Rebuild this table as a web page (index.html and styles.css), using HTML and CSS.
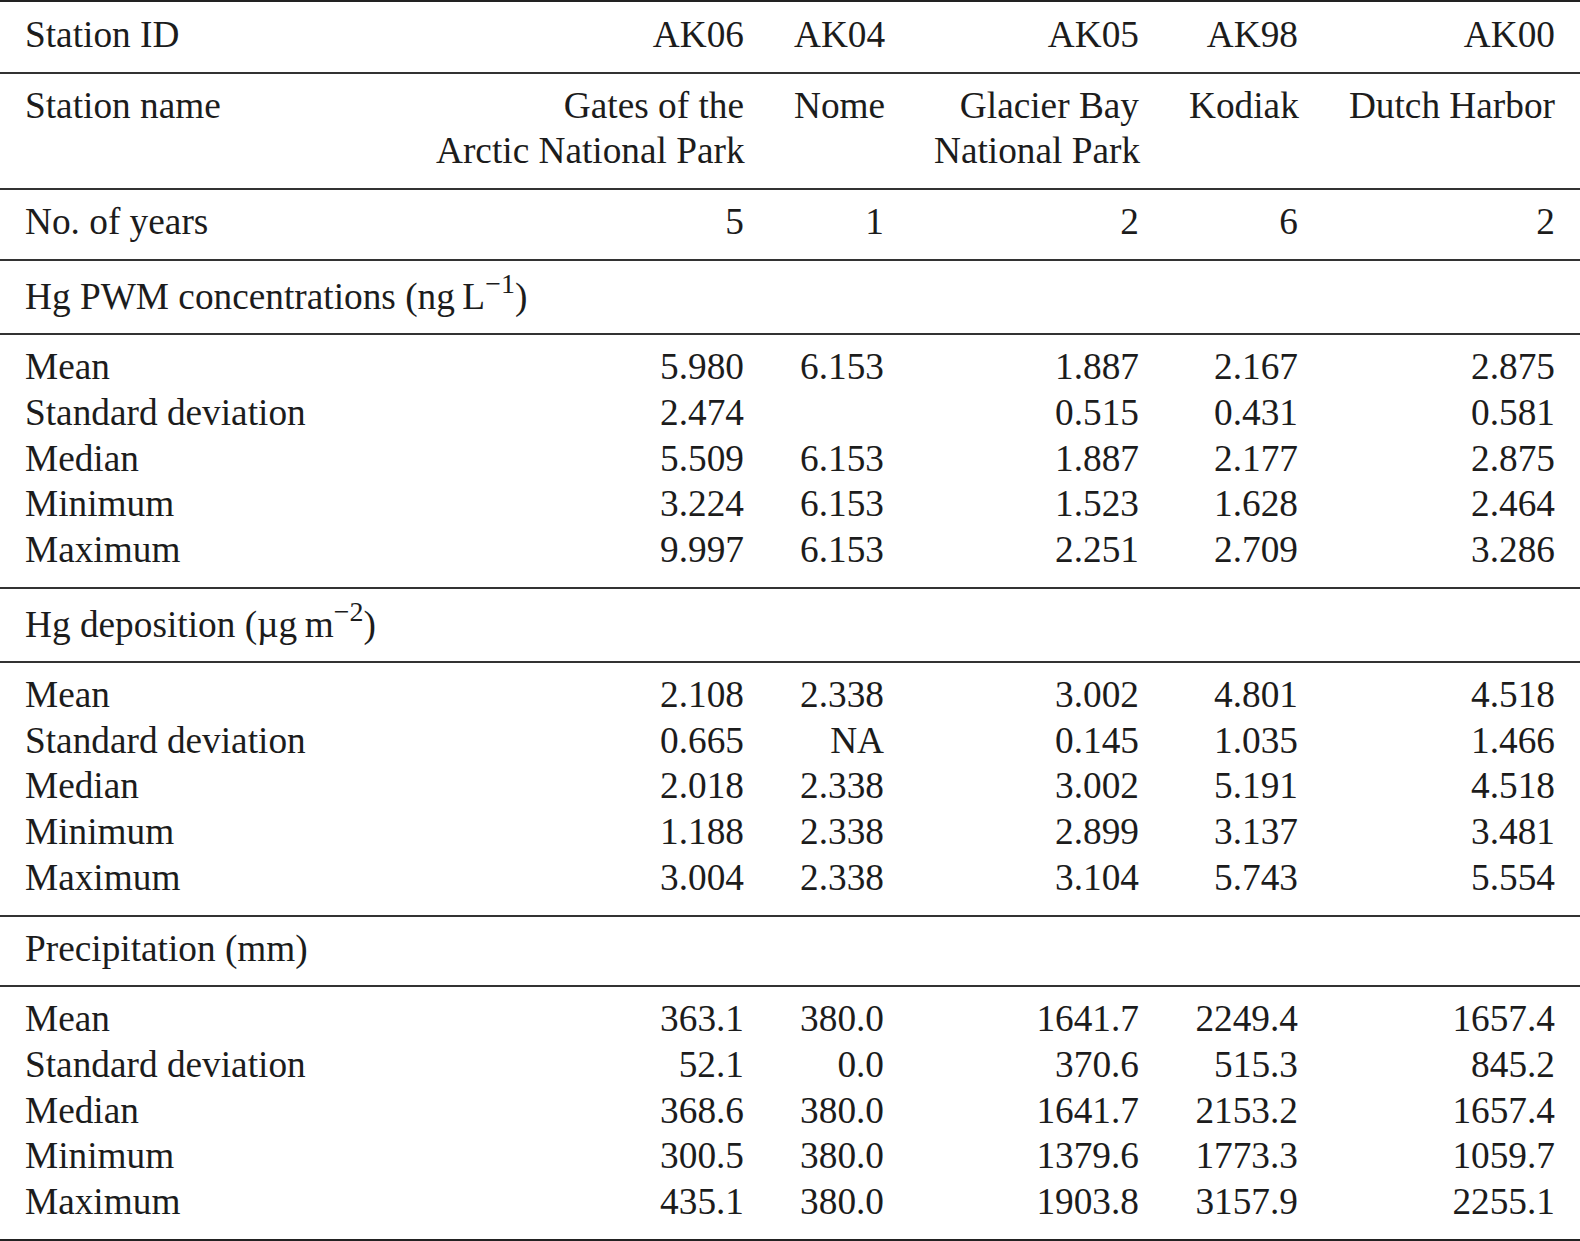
FILE: index.html
```html
<!DOCTYPE html>
<html lang="en">
<head>
<meta charset="utf-8">
<title>Alaska Hg stations</title>
<link rel="stylesheet" href="styles.css">
</head>
<body>
<table class="data">
  <colgroup>
    <col class="c-label">
    <col class="c-ak06">
    <col class="c-ak04">
    <col class="c-ak05">
    <col class="c-ak98">
    <col class="c-ak00">
  </colgroup>
  <tbody>
    <tr class="single top-rule">
      <td>Station ID</td><td>AK06</td><td>AK04</td><td>AK05</td><td>AK98</td><td>AK00</td>
    </tr>
    <tr class="single">
      <td>Station name</td><td>Gates of the<br>Arctic National Park</td><td>Nome</td><td>Glacier Bay<br>National Park</td><td>Kodiak</td><td>Dutch Harbor</td>
    </tr>
    <tr class="single">
      <td>No. of years</td><td>5</td><td>1</td><td>2</td><td>6</td><td>2</td>
    </tr>
    <tr class="single section">
      <td colspan="6">Hg PWM concentrations (ng&#8201;L<sup>−1</sup>)</td>
    </tr>
  </tbody>
  <tbody class="group">
    <tr><td>Mean</td><td>5.980</td><td>6.153</td><td>1.887</td><td>2.167</td><td>2.875</td></tr>
    <tr><td>Standard deviation</td><td>2.474</td><td></td><td>0.515</td><td>0.431</td><td>0.581</td></tr>
    <tr><td>Median</td><td>5.509</td><td>6.153</td><td>1.887</td><td>2.177</td><td>2.875</td></tr>
    <tr><td>Minimum</td><td>3.224</td><td>6.153</td><td>1.523</td><td>1.628</td><td>2.464</td></tr>
    <tr><td>Maximum</td><td>9.997</td><td>6.153</td><td>2.251</td><td>2.709</td><td>3.286</td></tr>
  </tbody>
  <tbody>
    <tr class="single section">
      <td colspan="6">Hg deposition (µg&#8201;m<sup>−2</sup>)</td>
    </tr>
  </tbody>
  <tbody class="group">
    <tr><td>Mean</td><td>2.108</td><td>2.338</td><td>3.002</td><td>4.801</td><td>4.518</td></tr>
    <tr><td>Standard deviation</td><td>0.665</td><td>NA</td><td>0.145</td><td>1.035</td><td>1.466</td></tr>
    <tr><td>Median</td><td>2.018</td><td>2.338</td><td>3.002</td><td>5.191</td><td>4.518</td></tr>
    <tr><td>Minimum</td><td>1.188</td><td>2.338</td><td>2.899</td><td>3.137</td><td>3.481</td></tr>
    <tr><td>Maximum</td><td>3.004</td><td>2.338</td><td>3.104</td><td>5.743</td><td>5.554</td></tr>
  </tbody>
  <tbody>
    <tr class="single section">
      <td colspan="6">Precipitation (mm)</td>
    </tr>
  </tbody>
  <tbody class="group last-group">
    <tr><td>Mean</td><td>363.1</td><td>380.0</td><td>1641.7</td><td>2249.4</td><td>1657.4</td></tr>
    <tr><td>Standard deviation</td><td>52.1</td><td>0.0</td><td>370.6</td><td>515.3</td><td>845.2</td></tr>
    <tr><td>Median</td><td>368.6</td><td>380.0</td><td>1641.7</td><td>2153.2</td><td>1657.4</td></tr>
    <tr><td>Minimum</td><td>300.5</td><td>380.0</td><td>1379.6</td><td>1773.3</td><td>1059.7</td></tr>
    <tr><td>Maximum</td><td>435.1</td><td>380.0</td><td>1903.8</td><td>3157.9</td><td>2255.1</td></tr>
  </tbody>
</table>
</body>
</html>
```

FILE: styles.css
```css
html, body {
  margin: 0;
  padding: 0;
  background: #ffffff;
}

.data {
  width: 1580px;
  border-collapse: collapse;
  table-layout: fixed;
  font-family: "Liberation Serif", "Times New Roman", serif;
  font-size: 37.3px;
  line-height: 45.72px;
  color: #1c1c1c;
}

.c-label { width: 411px; }
.c-ak06 { width: 358px; }
.c-ak04 { width: 140px; }
.c-ak05 { width: 255px; }
.c-ak98 { width: 159px; }
.c-ak00 { width: 257px; }

.data td {
  padding: 0 25px;
  text-align: right;
  vertical-align: top;
  white-space: nowrap;
}

.data td:first-child {
  text-align: left;
}

.single td {
  padding-top: 9px;
  padding-bottom: 14px;
  border-bottom: 2px solid #333333;
}

.top-rule td {
  padding-top: 10px;
  border-top: 2px solid #222222;
}

.group tr:first-child td {
  padding-top: 9px;
}

.group tr:last-child td {
  padding-bottom: 14px;
  border-bottom: 2px solid #333333;
}

.last-group tr:last-child td {
  border-bottom-color: #222222;
}

.data sup {
  font-size: 0.75em;
  line-height: 1;
  vertical-align: 15.5px;
}
```
